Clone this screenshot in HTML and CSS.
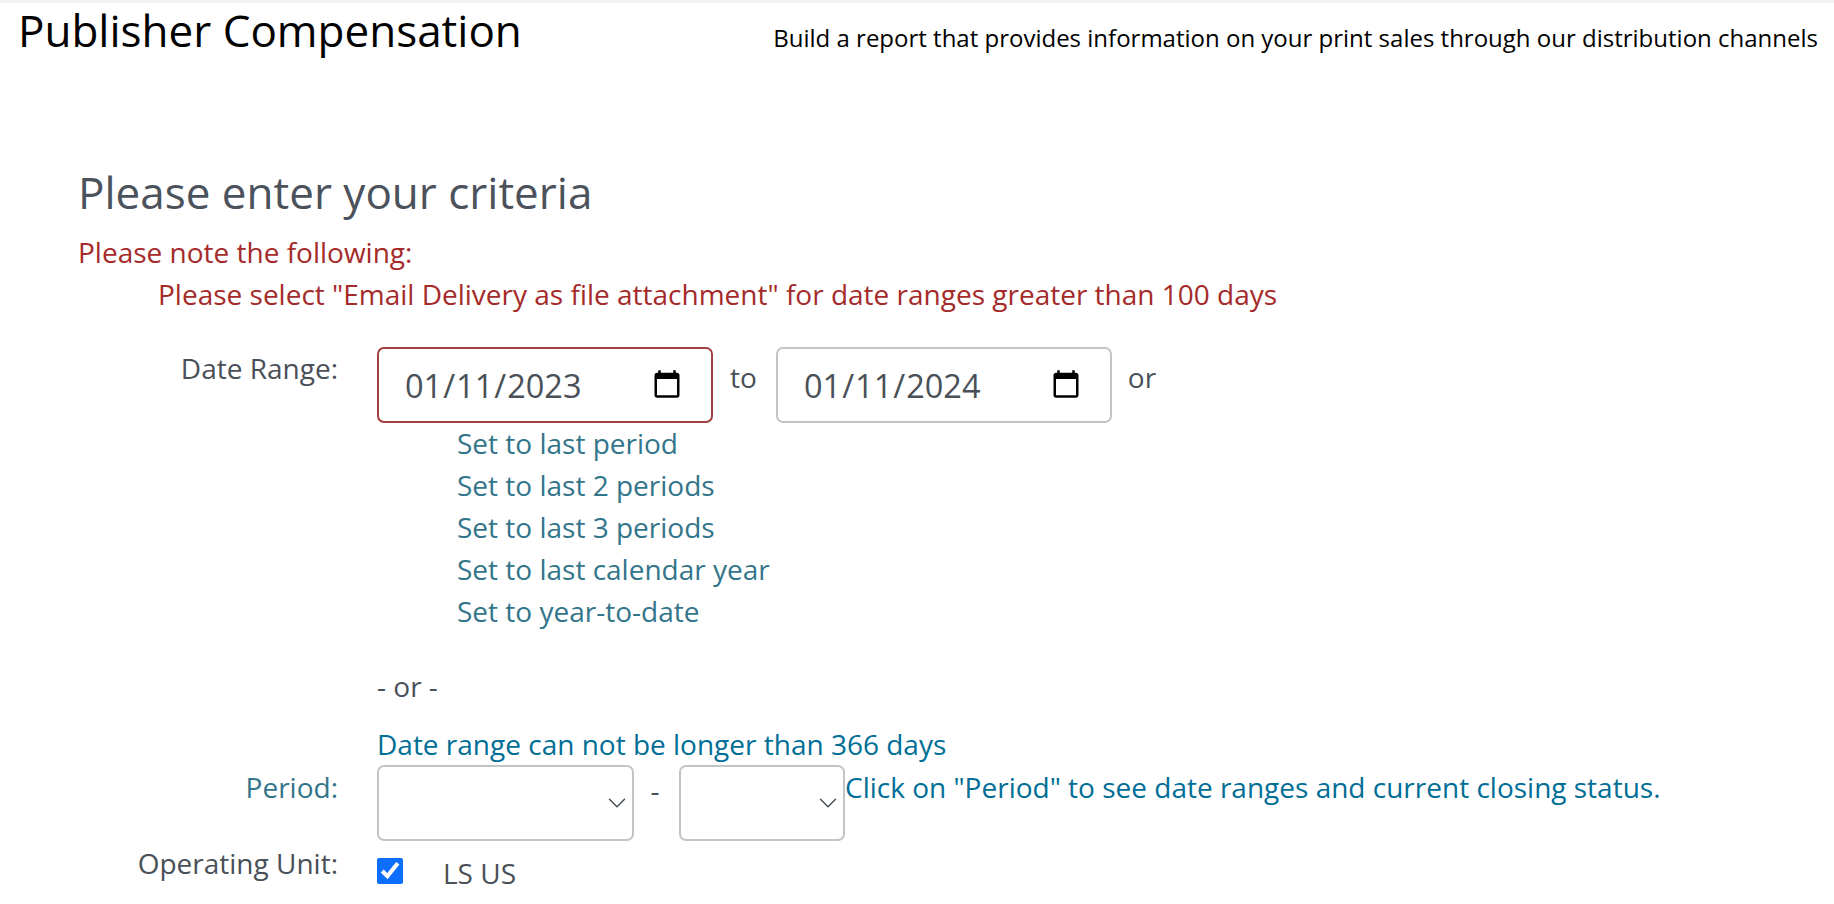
FILE: index.html
```html
<!DOCTYPE html>
<html lang="en">
<head>
    <meta charset="UTF-8">
    <meta name="viewport" content="width=device-width, initial-scale=1.0">
    <title>Publisher Compensation</title>
    <link rel="stylesheet" href="styles.css">
</head>
<body>

<div class="page-header">
    <h1>Publisher Compensation</h1>
    <p class="page-desc">Build a report that provides information on your print sales through our distribution channels</p>
</div>

<form class="criteria">
    <h2>Please enter your criteria</h2>
    <div class="note">
        <p>Please note the following:</p>
        <p class="note-item">Please select "Email Delivery as file attachment" for date ranges greater than 100 days</p>
    </div>

    <div class="row row-date">
        <label class="row-label">Date Range:</label>
        <div class="row-body">
            <div class="date-line">
                <input class="field date-field date-error" type="date" value="2023-01-11">
                <span class="date-sep">to</span>
                <input class="field date-field" type="date" value="2024-01-11">
                <span class="date-sep date-or">or</span>
            </div>
            <div class="shortcuts">
                <a href="#">Set to last period</a>
                <a href="#">Set to last 2 periods</a>
                <a href="#">Set to last 3 periods</a>
                <a href="#">Set to last calendar year</a>
                <a href="#">Set to year-to-date</a>
            </div>
            <div class="or-line">- or -</div>
            <div class="hint">Date range can not be longer than 366 days</div>
        </div>
    </div>

    <div class="row row-period">
        <a class="row-label period-link" href="#">Period:</a>
        <div class="period-line">
            <select class="field period-select period-from"></select>
            <span class="period-dash">-</span>
            <select class="field period-select period-to"></select>
            <span class="hint">Click on "Period" to see date ranges and current closing status.</span>
        </div>
    </div>

    <div class="row row-unit">
        <label class="row-label unit-label">Operating Unit:</label>
        <div class="unit-line">
            <input class="unit-check" type="checkbox" checked>
            <span class="unit-name">LS US</span>
        </div>
    </div>
</form>

</body>
</html>
```

FILE: styles.css
```css
html, body {
    height: 100%;
    overflow: hidden;
}
body {
    margin: 0;
    font-family: "Open Sans", sans-serif;
    font-size: 28px;
    color: #495057;
    background-color: #fff;
    border-top: 3px solid #f3f3f3;
    box-sizing: border-box;
}
.page-header {
    display: flex;
    justify-content: space-between;
    padding: 0 16px 0 18px;
    color: #000;
}
.page-header h1 {
    margin: 0;
    font-size: 44px;
    font-weight: 400;
    line-height: 54px;
}
.page-desc {
    margin: 18px 0 0;
    font-size: 24px;
    line-height: 34px;
}
.criteria {
    padding: 0 0 0 78px;
}
.criteria h2 {
    margin: 107px 0 0;
    font-size: 44px;
    font-weight: 400;
    line-height: 56px;
    color: #4b525c;
}
.note {
    margin-top: 11px;
    color: #a52a2a;
    line-height: 42px;
}
.note p {
    margin: 0;
}
.note-item {
    padding-left: 80px;
}
.row {
    display: flex;
}
.row-label {
    width: 260px;
    flex: none;
    text-align: right;
    line-height: 42px;
    text-decoration: none;
}
.row-body {
    margin-left: 39px;
}
.row-date {
    margin-top: 32px;
}
.date-line {
    display: flex;
    align-items: flex-start;
}
.field {
    box-sizing: border-box;
    height: 76px;
    border: 2px solid #c4c4c4;
    border-radius: 7px;
    background-color: #fff;
    font-family: inherit;
    color: #495057;
}
.date-field {
    width: 336px;
    padding: 0 26px 0 25px;
    font-size: 32.5px;
    outline: none;
}
.date-error {
    border-color: #a04040;
}
.date-sep {
    box-sizing: border-box;
    width: 63px;
    padding-right: 2px;
    text-align: center;
    line-height: 60px;
}
.date-or {
    padding-right: 0;
    width: 60px;
}
.shortcuts {
    margin-top: -1px;
    padding-left: 80px;
}
.shortcuts a {
    display: block;
    line-height: 42px;
    color: #33758a;
    text-decoration: none;
}
.or-line {
    margin-top: 33px;
    line-height: 42px;
}
.hint {
    color: #006e96;
    line-height: 42px;
}
.or-line + .hint {
    margin-top: 16px;
}
.period-link {
    color: #33758a;
    line-height: 44px;
}
.period-line {
    display: flex;
    align-items: flex-start;
    margin-left: 39px;
}
.period-select {
    appearance: none;
    background-image: url("data:image/svg+xml,%3Csvg xmlns='http://www.w3.org/2000/svg' viewBox='0 0 16 16'%3E%3Cpath fill='none' stroke='%23495057' stroke-width='1.2' stroke-linecap='round' d='M2 5l6 6 6-6'/%3E%3C/svg%3E");
    background-repeat: no-repeat;
    background-size: 20px 20px;
    background-position: right 5px center;
}
.period-from {
    width: 257px;
}
.period-to {
    width: 166px;
}
.period-dash {
    width: 42px;
    padding-right: 3px;
    text-align: center;
    line-height: 50px;
}
.period-line .hint {
    line-height: 44px;
}
.row-unit {
    margin-top: 2px;
}
.unit-label {
    line-height: 40px;
}
.unit-line {
    display: flex;
    align-items: flex-start;
    margin-left: 39px;
}
.unit-check {
    width: 26px;
    height: 26px;
    margin: 15px 0 0;
    accent-color: #0d6efd;
}
.unit-name {
    margin-left: 40px;
    line-height: 40px;
    padding-top: 10px;
}
```
